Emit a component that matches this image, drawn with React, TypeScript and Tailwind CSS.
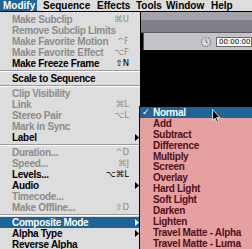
import React from 'react';

type Item =
  | { sep: true }
  | { label: string; key?: string; on?: boolean; sub?: boolean; hi?: boolean };

const MAIN: Item[] = [
  { label: 'Make Subclip', key: '⌘U' },
  { label: 'Remove Subclip Limits' },
  { label: 'Make Favorite Motion', key: '^F' },
  { label: 'Make Favorite Effect', key: '⌥F' },
  { label: 'Make Freeze Frame', key: '⇧N', on: true },
  { sep: true },
  { label: 'Scale to Sequence', on: true },
  { sep: true },
  { label: 'Clip Visibility' },
  { label: 'Link', key: '⌘L' },
  { label: 'Stereo Pair', key: '⌥L' },
  { label: 'Mark in Sync' },
  { label: 'Label', on: true, sub: true },
  { sep: true },
  { label: 'Duration...', key: '^D' },
  { label: 'Speed...', key: '⌘J' },
  { label: 'Levels...', key: '⌥⌘L', on: true },
  { label: 'Audio', on: true, sub: true },
  { label: 'Timecode...' },
  { label: 'Make Offline...', key: '⇧D' },
  { sep: true },
  { label: 'Composite Mode', on: true, sub: true, hi: true },
  { label: 'Alpha Type', on: true, sub: true },
  { label: 'Reverse Alpha', on: true },
];

const MODES = [
  'Normal',
  'Add',
  'Subtract',
  'Difference',
  'Multiply',
  'Screen',
  'Overlay',
  'Hard Light',
  'Soft Light',
  'Darken',
  'Lighten',
  'Travel Matte - Alpha',
  'Travel Matte - Luma',
];

const FONT = "font-['Liberation_Sans',Arial,sans-serif] font-bold text-[10px] tracking-[-0.3px]";

function Arrow({ white }: { white?: boolean }) {
  return (
    <svg width="4" height="7" viewBox="0 0 4 7" className="absolute left-[135px] top-[2px]">
      <path d="M0 0 L4 3.5 L0 7 Z" fill={white ? '#ffffff' : '#000000'} />
    </svg>
  );
}

function MenuRow({ item }: { item: Item }) {
  if ('sep' in item) {
    return (
      <div className="h-[4px] flex flex-col justify-center">
        <div className="h-px bg-[#9a9a9a]" />
        <div className="h-px bg-white" />
      </div>
    );
  }
  const color = item.hi ? 'text-white' : item.on ? 'text-black' : 'text-[#8c8c8c]';
  return (
    <div className={`relative h-[11px] flex items-center pl-[12px] pr-[11px] ${item.hi ? 'bg-[#1e6496]' : ''} ${color}`}>
      <span className={`flex-1 leading-[11px] whitespace-nowrap ${FONT}`}>{item.label}</span>
      {item.key && (
        <span className="font-['DejaVu_Sans',sans-serif] text-[8.5px] leading-[11px] whitespace-nowrap">{item.key}</span>
      )}
      {item.sub && <Arrow white={item.hi} />}
    </div>
  );
}

export default function App() {
  return (
    <div className="relative w-[252px] h-[249px] overflow-hidden bg-black">
      {/* menu bar */}
      <div className={`flex h-[12px] bg-[#dddddd] border-b border-black text-black ${FONT} tracking-normal leading-[11px]`}>
        <div className="w-[37px] shrink-0 pl-[3px] bg-[#1e6496] text-white">Modify</div>
        <div className="w-[57px] shrink-0 pl-[6px]">Sequence</div>
        <div className="w-[39px] shrink-0 pl-[3px]">Effects</div>
        <div className="w-[29px] shrink-0 pl-[3px]">Tools</div>
        <div className="w-[45px] shrink-0 pl-[4px]">Window</div>
        <div className="w-[45px] shrink-0 pl-[4px]">Help</div>
      </div>

      <div className="flex">
        {/* Modify menu */}
        <div className="w-[141px] shrink-0 bg-[#dddddd] border-r border-black pt-[2px] h-[237px]">
          {MAIN.map((it, i) => (
            <MenuRow key={i} item={it} />
          ))}
        </div>

        {/* window behind */}
        <div className="flex-1 flex flex-col">
          <div className="h-[8px] bg-[#a3a3aa]" />
          <div className="h-[13px] bg-[#7f808a] border-b border-[#5a5a62]" />
          <div className="h-[17px] bg-[#c4c4c8] border-l border-[#555] ml-[2px] flex items-center justify-end gap-[4px]">
            <svg width="12" height="12" viewBox="0 0 12 12">
              <circle cx="6" cy="6" r="4.5" fill="#d8d8dc" stroke="#777" strokeWidth="1.2" strokeDasharray="1.5 1" />
              <path d="M6 6 L6 3 M6 6 L8 7" stroke="#555" strokeWidth="0.8" />
            </svg>
            <div className="h-[10px] w-[36px] bg-white border border-[#666] font-['DejaVu_Sans',sans-serif] text-[7px] leading-[8px] pl-[2px] text-black">
              00:00:00
            </div>
          </div>
          <div className="flex-1 bg-black" />
        </div>
      </div>

      {/* Composite Mode submenu */}
      <div className="absolute left-[139px] top-[106px] w-[120px] h-[150px] bg-[#e6a0a0] border border-black">
        {MODES.map((m, i) => (
          <div
            key={m}
            className={`relative h-[10.9px] flex items-center pl-[13px] ${i === 0 ? 'bg-[#1e6496] text-white' : 'text-[#50101a]'}`}
          >
            {i === 0 && (
              <span className="absolute left-[2px] font-['DejaVu_Sans',sans-serif] text-[9px] leading-[11px] font-bold">✓</span>
            )}
            <span className={`leading-[11px] whitespace-nowrap ${FONT} tracking-[-0.2px]`}>{m}</span>
          </div>
        ))}
      </div>

      {/* cursor */}
      <svg width="9" height="15" viewBox="0 0 9 15" className="absolute left-[212px] top-[109px]">
        <path d="M0.5 0.5 L0.5 11.5 L3 9 L5 13.5 L6.5 12.8 L4.6 8.6 L8 8.6 Z" fill="#000" stroke="#fff" strokeWidth="0.8" />
      </svg>
    </div>
  );
}
